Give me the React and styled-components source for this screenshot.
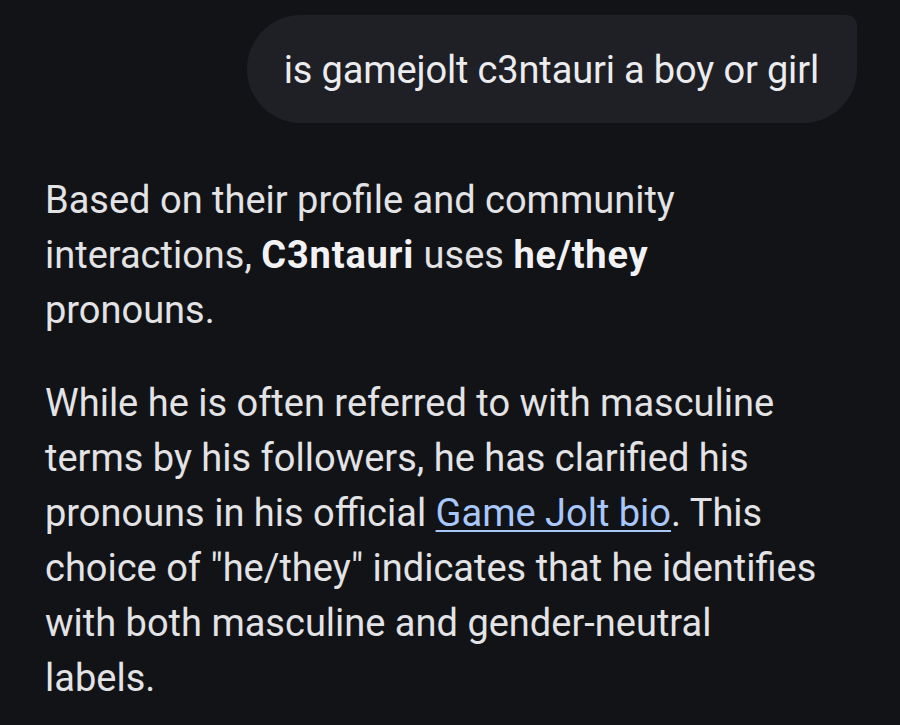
import styled, { createGlobalStyle } from 'styled-components';

const GlobalStyle = createGlobalStyle`
  html, body {
    margin: 0;
    padding: 0;
    background: #121317;
  }
  body {
    font-family: Roboto, "Noto Sans", "Liberation Sans", sans-serif;
    color: #e3e3e6;
  }
`;

const Page = styled.main`
  min-height: 725px;
  padding: 15px 45px 0 45px;
  box-sizing: border-box;
  display: flex;
  flex-direction: column;
`;

const QueryRow = styled.div`
  display: flex;
  justify-content: flex-end;
  margin-right: -2px;
`;

const QueryBubble = styled.div`
  background: #1f2025;
  border-radius: 54px 10px 54px 54px;
  height: 108px;
  padding: 2px 38px 0 37px;
  box-sizing: border-box;
  display: flex;
  align-items: center;
  font-size: 38px;
  letter-spacing: -0.15px;
  color: #ececef;
`;

const Answer = styled.section`
  margin-top: 50px;
  display: flex;
  flex-direction: column;
  gap: 38px;
`;

const Paragraph = styled.p`
  margin: 0;
  font-size: 38px;
  line-height: 55px;
  max-width: 778px;
`;

const Strong = styled.b`
  font-weight: 700;
  letter-spacing: 0.8px;
  color: #f2f2f4;
`;

const Link = styled.a`
  color: #a8c7fa;
  text-decoration: underline;
  text-decoration-thickness: 2px;
  text-underline-offset: 4px;
`;

export default function App() {
  return (
    <>
      <GlobalStyle />
      <Page>
        <QueryRow>
          <QueryBubble>is gamejolt c3ntauri a boy or girl</QueryBubble>
        </QueryRow>
        <Answer>
          <Paragraph>
            Based on their profile and community interactions, <Strong>C3ntauri</Strong> uses{' '}
            <Strong>he/they</Strong> pronouns.
          </Paragraph>
          <Paragraph>
            While he is often referred to with masculine terms by his followers, he has clarified his
            pronouns in his official <Link href="#">Game Jolt bio</Link>. This choice of "he/they"
            indicates that he identifies with both masculine and gender-neutral labels.
          </Paragraph>
        </Answer>
      </Page>
    </>
  );
}
